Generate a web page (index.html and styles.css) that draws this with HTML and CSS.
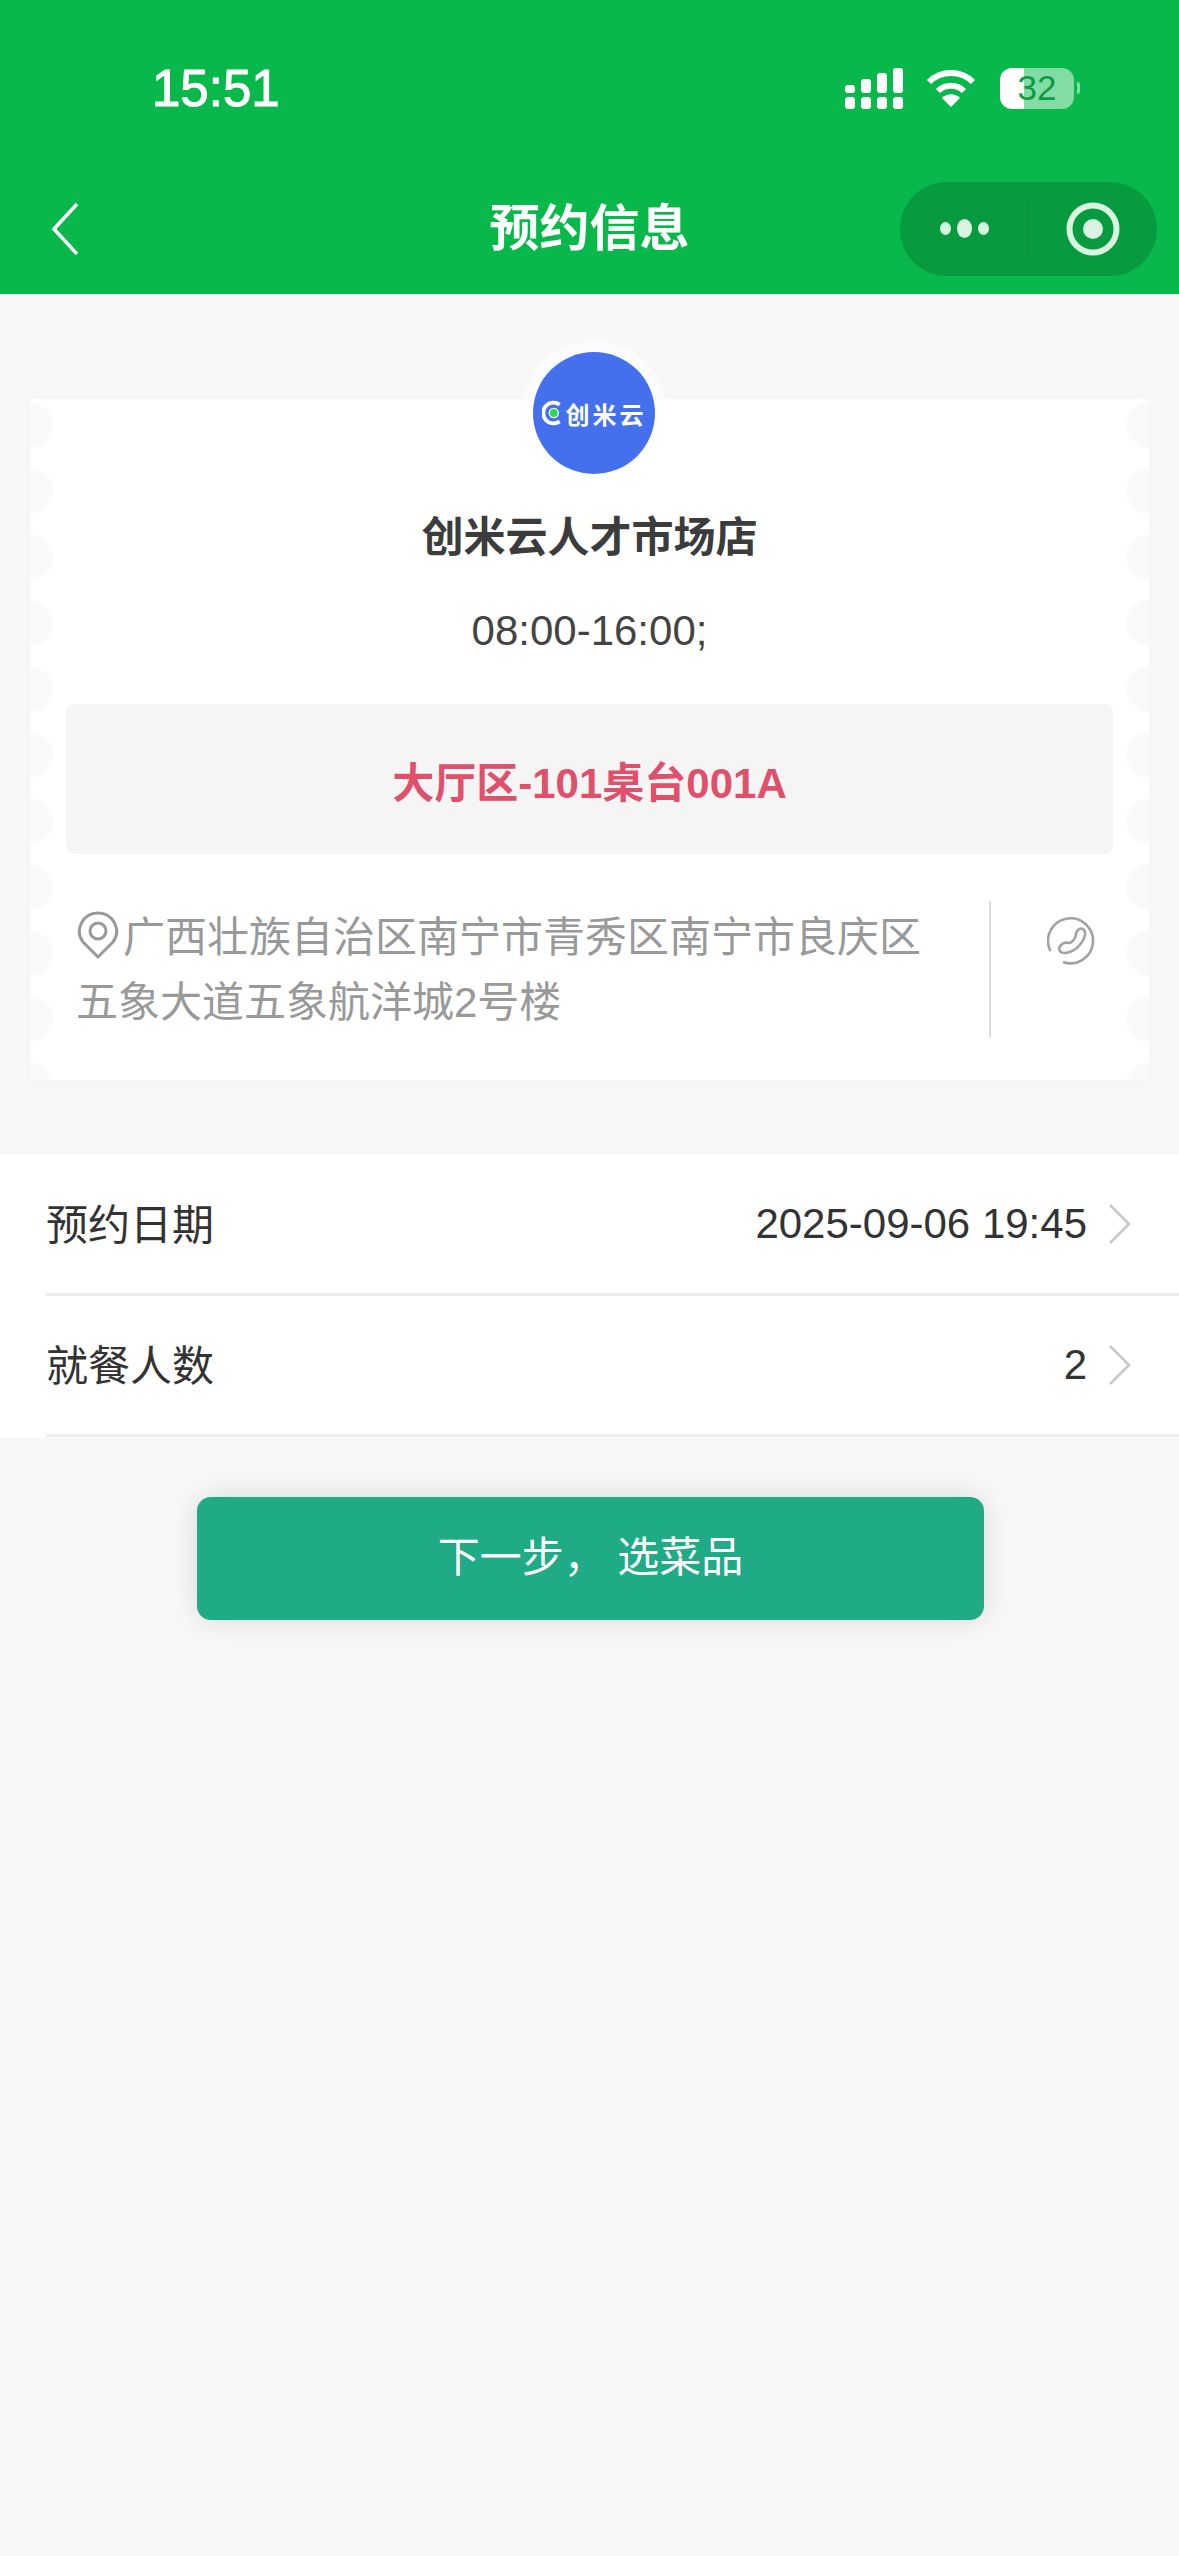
FILE: index.html
```html
<!DOCTYPE html>
<html lang="zh-CN">
<head>
  <meta charset="UTF-8">
  <title>预约信息</title>
  <link rel="stylesheet" href="styles.css">
</head>
<body>
  <header class="topbar">
    <div class="status">
      <span class="clock">15:51</span>
      <div class="status-icons">
        <svg class="signal" width="58" height="41" viewBox="0 0 58 41" fill="#fff">
          <rect x="0" y="17" width="10" height="8" rx="3"/><rect x="0" y="29" width="10" height="12" rx="3"/>
          <rect x="16" y="11" width="10" height="14" rx="3"/><rect x="16" y="29" width="10" height="12" rx="3"/>
          <rect x="32" y="5" width="10" height="20" rx="3"/><rect x="32" y="29" width="10" height="12" rx="3"/>
          <rect x="48" y="0" width="10" height="25" rx="3"/><rect x="48" y="29" width="10" height="12" rx="3"/>
        </svg>
        <svg class="wifi" width="50" height="38" viewBox="0 0 50 38" fill="none" stroke="#fff" stroke-width="6">
          <path d="M3 13C15 1 35 1 47 13"/>
          <path d="M12 22C19 15 31 15 38 22"/>
          <path d="M25 38L16 29C21 24 29 24 34 29Z" fill="#fff" stroke="none"/>
        </svg>
        <div class="battery"><span>32</span></div>
        <i class="battery-tip"></i>
      </div>
    </div>
    <nav class="navbar">
      <svg class="back" width="26" height="52" viewBox="0 0 26 52" fill="none" stroke="#fff" stroke-width="3.5">
        <path d="M25 1L2 26L25 51"/>
      </svg>
      <h1 class="nav-title">预约信息</h1>
      <div class="capsule">
        <div class="capsule-more"><i></i><i class="big"></i><i></i></div>
        <svg class="capsule-target" width="54" height="54" viewBox="0 0 54 54" fill="none">
          <circle cx="27" cy="27" r="23.5" stroke="#d8f3e0" stroke-width="6"/>
          <circle cx="27" cy="27" r="10" fill="#d8f3e0"/>
        </svg>
      </div>
    </nav>
  </header>

  <section class="card">
    <div class="logo">
      <svg width="32" height="40" viewBox="0 0 32 40" fill="none">
        <path d="M27 7A16 16 0 1 0 27 33" stroke="#fff" stroke-width="6"/>
        <circle cx="18" cy="20" r="7" fill="#2fd84f" stroke="#fff" stroke-width="2"/>
      </svg>
      <span class="logo-text">创米云</span>
    </div>
    <h2 class="shop-name">创米云人才市场店</h2>
    <p class="shop-hours">08:00-16:00;</p>
    <div class="table-box">大厅区-101桌台001A</div>
    <div class="address-row">
      <p class="address">
        <svg class="pin" width="47" height="50" viewBox="0 0 47 50" fill="none" stroke="#999" stroke-width="3">
          <path d="M22 47L7 32C-2 20 7 3 22 3C37 3 46 20 37 32Z" stroke-linejoin="round"/>
          <circle cx="22" cy="21" r="8"/>
        </svg>广西壮族自治区南宁市青秀区南宁市良庆区五象大道五象航洋城2号楼
      </p>
      <svg class="phone" width="48" height="48" viewBox="0 0 48 48" fill="none" stroke="#a3a3a3" stroke-width="2.6">
        <path d="M3.5 34A22.5 22.5 0 1 1 16 45"/>
        <path d="M31 13C34 10 39 12 38 18C37 23 34 27 30 31C26 34 22 36 17 36C12 36 11 31 14 28L17 26C19 25 21 26 23 26C25 25 27 23 28 21C29 19 28 16 31 13Z"/>
      </svg>
    </div>
  </section>

  <section class="form-list">
    <div class="form-row">
      <span class="form-label">预约日期</span>
      <span class="form-value">2025-09-06 19:45</span>
      <svg class="chevron" width="22" height="40" viewBox="0 0 22 40" fill="none" stroke="#c8c8c8" stroke-width="2.6"><path d="M1 1L20 20L1 39"/></svg>
    </div>
    <div class="form-row">
      <span class="form-label">就餐人数</span>
      <span class="form-value">2</span>
      <svg class="chevron" width="22" height="40" viewBox="0 0 22 40" fill="none" stroke="#c8c8c8" stroke-width="2.6"><path d="M1 1L20 20L1 39"/></svg>
    </div>
  </section>

  <button class="next-btn" type="button">下一步， 选菜品</button>
</body>
</html>
```

FILE: styles.css
```css
* {
  box-sizing: border-box;
}
body {
  margin: 0;
  min-height: 2556px;
  background: #f8f8f8;
  font-family: "Liberation Sans", "Noto Sans CJK SC", sans-serif;
  font-size: 42px;
  color: #333;
}
h1, h2, p {
  margin: 0;
  font-weight: normal;
}

/* top green bar */
.topbar {
  background: #08b84a;
  height: 294px;
  color: #fff;
}
.status {
  height: 176px;
  display: flex;
  align-items: center;
  justify-content: space-between;
  padding: 0 99px 0 152px;
}
.clock {
  font-size: 51px;
  -webkit-text-stroke: 1px #fff;
}
.status-icons {
  display: flex;
  align-items: center;
}
.signal {
  margin-right: 23px;
}
.wifi {
  margin-right: 24px;
}
.battery {
  width: 74px;
  height: 41px;
  border-radius: 12px;
  background: linear-gradient(to right, #fff 32%, rgba(255, 255, 255, 0.5) 32%);
  display: flex;
  align-items: center;
  justify-content: center;
  color: #0a9c42;
  font-size: 35px;
}
.battery-tip {
  width: 3px;
  height: 12px;
  margin-left: 3px;
  border-radius: 0 3px 3px 0;
  background: rgba(255, 255, 255, 0.5);
}
.navbar {
  height: 118px;
  padding: 0 22px 13px;
  display: grid;
  grid-template-columns: 1fr auto 1fr;
  align-items: center;
}
.back {
  margin-left: 30px;
}
.nav-title {
  font-size: 50px;
  font-weight: bold;
  line-height: 60px;
}
.capsule {
  justify-self: end;
  width: 257px;
  height: 94px;
  border-radius: 47px;
  background: #079a3e;
  display: flex;
  align-items: center;
}
.capsule-more {
  width: 128px;
  height: 56px;
  border-right: 1px solid #08903b;
  display: flex;
  align-items: center;
  justify-content: center;
  gap: 6px;
  padding-left: 2px;
}
.capsule-more i {
  width: 11px;
  height: 13px;
  border-radius: 50%;
  background: #d8f3e0;
}
.capsule-more i.big {
  width: 15px;
  height: 19px;
}
.capsule-target {
  margin-left: 38px;
}

/* ticket card */
.card {
  position: relative;
  display: flow-root;
  margin: 105px 30px 0;
  width: 1119px;
  height: 681px;
  padding: 0 36px;
  background: #fff;
  box-shadow: 0 -3px 8px rgba(0, 0, 0, 0.012), 0 4px 10px rgba(0, 0, 0, 0.015);
}
.card::before,
.card::after {
  content: "";
  position: absolute;
  top: 0;
  bottom: 0;
  width: 24px;
  background-size: 24px 66px;
  background-repeat: repeat-y;
}
.card::before {
  left: 0;
  background-image: radial-gradient(circle at 0 26px, #f9f9f9 21px, transparent 24px);
}
.card::after {
  right: 0;
  background-image: radial-gradient(circle at 24px 26px, #f9f9f9 21px, transparent 24px);
}
.logo {
  position: relative;
  z-index: 1;
  width: 122px;
  height: 122px;
  margin: -47px 0 0 467px;
  border-radius: 50%;
  background: #4470ee;
  box-shadow: 0 0 0 11px rgba(255, 255, 255, 0.6);
  display: flex;
  align-items: center;
  justify-content: center;
  gap: 3px;
  color: #fff;
}
.logo svg {
  width: 21px;
  height: 26px;
}
.logo-text {
  font-size: 24px;
  font-weight: bold;
  letter-spacing: 3px;
  white-space: nowrap;
}
.shop-name {
  margin-top: 34px;
  font-size: 42px;
  font-weight: bold;
  line-height: 60px;
  text-align: center;
  color: #3c3c3c;
}
.shop-hours {
  margin-top: 33px;
  line-height: 60px;
  text-align: center;
  color: #444;
}
.table-box {
  margin-top: 43px;
  height: 150px;
  border-radius: 8px;
  background: #f5f5f5;
  display: flex;
  align-items: center;
  justify-content: center;
  color: #e0506a;
  font-weight: bold;
}
.address-row {
  margin-top: 47px;
  display: flex;
  align-items: flex-start;
  padding-left: 10px;
}
.address {
  width: 915px;
  height: 136px;
  padding: 4px 47px 0 0;
  border-right: 2px solid #dcdcdc;
  color: #999;
  line-height: 65px;
}
.pin {
  vertical-align: -8px;
}
.phone {
  margin: 16px 0 0 56px;
}

/* date and people rows */
.form-list {
  margin-top: 75px;
  background: #fff;
}
.form-row {
  height: 141px;
  margin-left: 46px;
  padding-right: 48px;
  border-bottom: 3px solid #ececec;
  display: flex;
  align-items: center;
}
.form-label {
  flex: 1;
  margin-top: -6px;
}
.form-value {
  margin-right: 22px;
}

.next-btn {
  display: block;
  width: 787px;
  height: 123px;
  margin: 60px 0 0 197px;
  padding: 0 0 10px;
  border: none;
  border-radius: 14px;
  background: #1fab85;
  box-shadow: 0 0 30px rgba(0, 0, 0, 0.13);
  color: #fff;
  font-family: inherit;
  font-size: 42px;
}
```
